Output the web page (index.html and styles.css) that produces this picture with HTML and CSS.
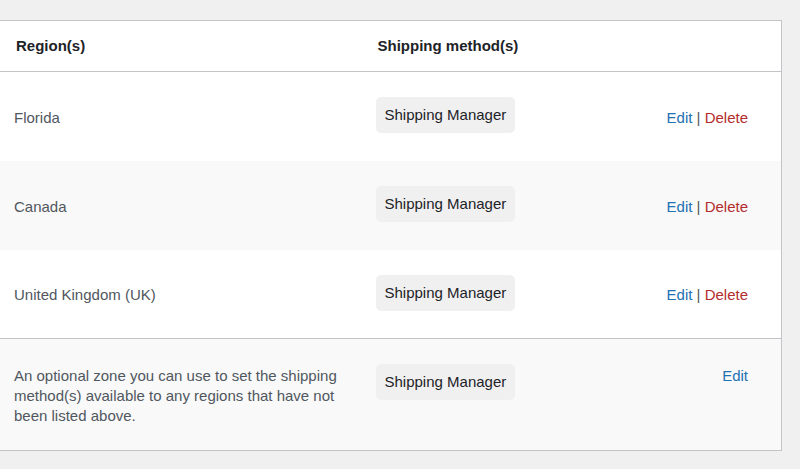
FILE: index.html
```html
<!DOCTYPE html>
<html>
<head>
<meta charset="utf-8">
<link rel="stylesheet" href="styles.css">
</head>
<body>
<div class="page">
  <table class="zones">
    <colgroup>
      <col class="c-region">
      <col class="c-method">
      <col class="c-actions">
    </colgroup>
    <thead>
      <tr>
        <th class="th-region">Region(s)</th>
        <th class="th-method">Shipping method(s)</th>
        <th></th>
      </tr>
    </thead>
    <tbody>
      <tr class="row">
        <td class="region">Florida</td>
        <td class="method"><span class="pill">Shipping Manager</span></td>
        <td class="actions"><a class="edit">Edit</a> <span class="sep">|</span> <a class="del">Delete</a></td>
      </tr>
      <tr class="row alt">
        <td class="region">Canada</td>
        <td class="method"><span class="pill">Shipping Manager</span></td>
        <td class="actions"><a class="edit">Edit</a> <span class="sep">|</span> <a class="del">Delete</a></td>
      </tr>
      <tr class="row">
        <td class="region">United Kingdom (UK)</td>
        <td class="method"><span class="pill">Shipping Manager</span></td>
        <td class="actions"><a class="edit">Edit</a> <span class="sep">|</span> <a class="del">Delete</a></td>
      </tr>
      <tr class="row rest alt">
        <td class="region">An optional zone you can use to set the shipping method(s) available to any regions that have not been listed above.</td>
        <td class="method"><span class="pill">Shipping Manager</span></td>
        <td class="actions"><a class="edit">Edit</a></td>
      </tr>
    </tbody>
  </table>
</div>
</body>
</html>
```
FILE: styles.css
```css
html, body {
  margin: 0;
  padding: 0;
}
body {
  background: #f0f0f1;
  font-family: "Liberation Sans", Arial, sans-serif;
  font-size: 15px;
  line-height: 20px;
  color: #50575e;
}
.page {
  padding-top: 20px;
  padding-bottom: 18px;
}
.zones {
  width: 783px;
  margin-left: -1px;
  border-collapse: collapse;
  table-layout: fixed;
  background: #fff;
  border: 1px solid #c3c4c7;
}
.c-region { width: 376px; }
.c-method { width: 200px; }
.c-actions { width: auto; }

thead th {
  height: 50px;
  padding: 0;
  text-align: left;
  font-weight: 700;
  color: #1d2327;
  border-bottom: 1px solid #c3c4c7;
  vertical-align: middle;
}
.th-region { padding-left: 16px; }
.th-method { padding-left: 2px; }

.row td {
  height: 89px;
  box-sizing: border-box;
  padding: 0;
  vertical-align: middle;
}
.row td.region,
.row td.actions {
  padding-top: 3px;
}
.row td.method {
  padding-bottom: 2px;
}
.row.alt td { background: #f9f9f9; }
.row td.region {
  padding-left: 14px;
  padding-right: 20px;
}
.row td.actions {
  text-align: right;
  padding-right: 33px;
}
.pill {
  display: inline-block;
  padding: 8px 9px;
  background: #f0f0f1;
  border-radius: 5px;
  color: #1d2327;
  white-space: nowrap;
}
.edit { color: #2271b1; }
.del { color: #b32d2e; }
.sep { color: #50575e; }

.rest td {
  border-top: 1px solid #c3c4c7;
}
.row.rest td {
  height: auto;
  vertical-align: top;
  padding-top: 25px;
  padding-bottom: 26px;
}
.row.rest td.region,
.row.rest td.actions {
  padding-top: 27px;
  padding-bottom: 24px;
}
```
